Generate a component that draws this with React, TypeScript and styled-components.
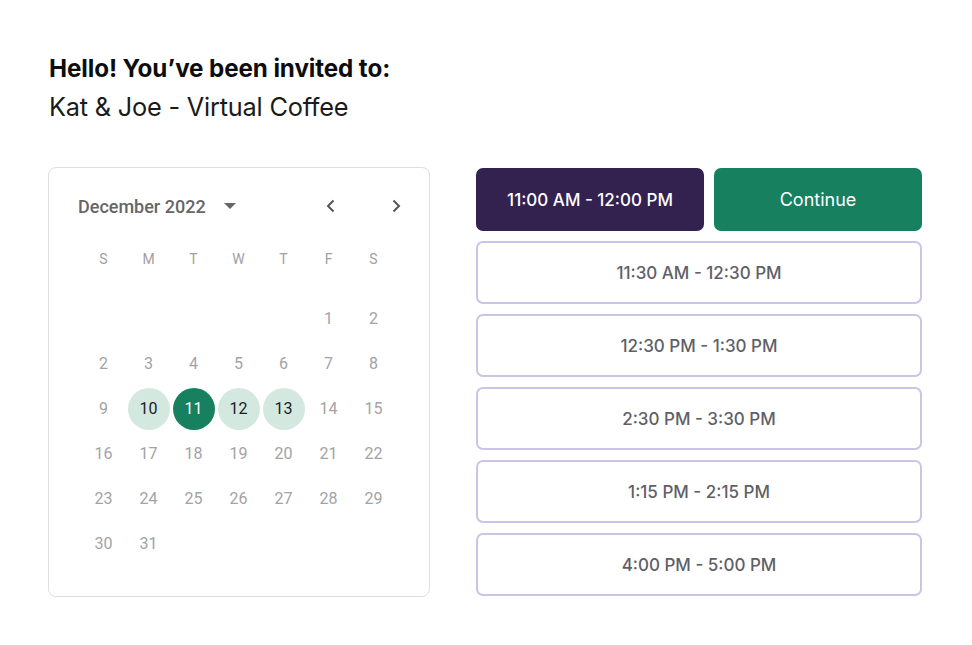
import React from "react";
import styled, { createGlobalStyle } from "styled-components";

const Global = createGlobalStyle`
  html, body {
    margin: 0;
    padding: 0;
    background: #ffffff;
  }
`;

const Page = styled.div`
  padding: 52px 0 0 48px;
  font-family: "Inter", sans-serif;
  color: #111;
`;

const Title = styled.h1`
  margin: 0 0 0 1px;
  font-size: 24.2px;
  line-height: 34px;
  font-weight: 700;
  letter-spacing: -0.1px;
  color: #0d0d0d;
`;

const Subtitle = styled.p`
  margin: 4px 0 0 1px;
  font-size: 25.3px;
  line-height: 34px;
  font-weight: 400;
  letter-spacing: -0.2px;
  color: #1a1a1a;
`;

const Body = styled.div`
  display: flex;
  gap: 46px;
  margin-top: 43px;
`;

const Card = styled.div`
  width: 380px;
  height: 428px;
  box-sizing: content-box;
  border: 1px solid #dedede;
  border-radius: 8px;
  font-family: "Roboto", sans-serif;
`;

const Header = styled.div`
  display: flex;
  align-items: center;
  height: 40px;
  margin: 18px 28px 0 29px;
`;

const Month = styled.span`
  font-size: 18px;
  font-weight: 500;
  color: #666;
`;

const Caret = styled.svg`
  margin-left: 18px;
`;

const Nav = styled.div`
  margin-left: auto;
  display: flex;
  gap: 55px;
  align-items: center;
`;

const Grid = styled.div`
  display: grid;
  grid-template-columns: repeat(7, 45px);
  margin-left: 32px;
`;

const Weekday = styled.div`
  height: 36px;
  display: flex;
  align-items: center;
  justify-content: center;
  font-size: 14px;
  color: #a0a0a0;
  margin-top: 15px;
  margin-bottom: 19px;
`;

const Cell = styled.div`
  height: 45px;
  display: flex;
  align-items: center;
  justify-content: center;
`;

const Day = styled.span<{ $tone: "plain" | "light" | "dark" }>`
  width: 42px;
  height: 42px;
  border-radius: 50%;
  display: flex;
  align-items: center;
  justify-content: center;
  font-size: 16px;
  color: ${(p) => (p.$tone === "plain" ? "#a3a3a3" : p.$tone === "dark" ? "#fff" : "#1d1d1d")};
  background: ${(p) => (p.$tone === "light" ? "#d3e8df" : p.$tone === "dark" ? "#16805f" : "transparent")};
`;

const Slots = styled.div`
  width: 446px;
  display: flex;
  flex-direction: column;
  gap: 10px;
  padding-top: 1px;
`;

const TopRow = styled.div`
  display: flex;
  gap: 10px;
`;

const Button = styled.button<{ $variant: "selected" | "go" | "slot" }>`
  height: 63px;
  border-radius: 7px;
  font-family: "Inter", sans-serif;
  font-size: 17px;
  font-weight: 500;
  display: flex;
  align-items: center;
  justify-content: center;
  box-sizing: border-box;
  cursor: pointer;
  ${(p) =>
    p.$variant === "selected"
      ? `width: 228px; background: #33214f; color: #fff; border: none;`
      : p.$variant === "go"
      ? `width: 208px; background: #16805f; color: #fff; border: none; font-size: 18px; font-weight: 400;`
      : `width: 446px; background: #fff; color: #5f5f68; border: 2px solid #cdc3e6;`}
`;

const weekdays = ["S", "M", "T", "W", "T", "F", "S"];
const days: (number | null)[] = [
  null, null, null, null, null, 1, 2,
  2, 3, 4, 5, 6, 7, 8,
  9, 10, 11, 12, 13, 14, 15,
  16, 17, 18, 19, 20, 21, 22,
  23, 24, 25, 26, 27, 28, 29,
  30, 31,
];

const slots = [
  "11:30 AM - 12:30 PM",
  "12:30 PM - 1:30 PM",
  "2:30 PM - 3:30 PM",
  "1:15 PM - 2:15 PM",
  "4:00 PM - 5:00 PM",
];

function tone(d: number): "plain" | "light" | "dark" {
  if (d === 11) return "dark";
  if (d === 10 || d === 12 || d === 13) return "light";
  return "plain";
}

export default function App() {
  return (
    <Page>
      <Global />
      <Title>Hello! You’ve been invited to:</Title>
      <Subtitle>Kat &amp; Joe - Virtual Coffee</Subtitle>
      <Body>
        <Card>
          <Header>
            <Month>December 2022</Month>
            <Caret width="12" height="6" viewBox="0 0 12 6">
              <path d="M0 0h12L6 6z" fill="#666" />
            </Caret>
            <Nav>
              <svg width="10" height="14" viewBox="0 0 10 14">
                <path d="M7.5 1.5L2 7l5.5 5.5" stroke="#555" strokeWidth="2" fill="none" />
              </svg>
              <svg width="10" height="14" viewBox="0 0 10 14">
                <path d="M2.5 1.5L8 7l-5.5 5.5" stroke="#555" strokeWidth="2" fill="none" />
              </svg>
            </Nav>
          </Header>
          <Grid>
            {weekdays.map((w, i) => (
              <Weekday key={i}>{w}</Weekday>
            ))}
            {days.map((d, i) => (
              <Cell key={i}>{d !== null && <Day $tone={tone(d)}>{d}</Day>}</Cell>
            ))}
          </Grid>
        </Card>
        <Slots>
          <TopRow>
            <Button $variant="selected">11:00 AM - 12:00 PM</Button>
            <Button $variant="go">Continue</Button>
          </TopRow>
          {slots.map((s) => (
            <Button key={s} $variant="slot">
              {s}
            </Button>
          ))}
        </Slots>
      </Body>
    </Page>
  );
}
